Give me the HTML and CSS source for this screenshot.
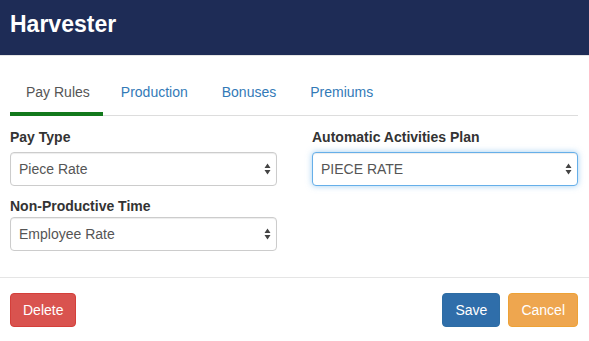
FILE: index.html
```html
<!DOCTYPE html>
<html lang="en">
<head>
<meta charset="utf-8">
<title>Harvester</title>
<link rel="stylesheet" href="styles.css">
</head>
<body>
<div class="modal">
  <header class="modal-header">
    <h1 class="modal-title">Harvester</h1>
  </header>
  <div class="modal-body">
    <ul class="tabs">
      <li class="tab active">Pay Rules</li>
      <li class="tab">Production</li>
      <li class="tab">Bonuses</li>
      <li class="tab">Premiums</li>
    </ul>
    <div class="form-grid">
      <div class="col">
        <div class="group first">
          <label class="label">Pay Type</label>
          <div class="select">
            <span class="select-value">Piece Rate</span>
            <svg class="caret" width="7" height="12" viewBox="0 0 7 12"><path d="M3.5 0.5 L6.5 5 L0.5 5 Z M0.5 7 L6.5 7 L3.5 11.5 Z" fill="#444"/></svg>
          </div>
        </div>
        <div class="group second">
          <label class="label">Non-Productive Time</label>
          <div class="select">
            <span class="select-value">Employee Rate</span>
            <svg class="caret" width="7" height="12" viewBox="0 0 7 12"><path d="M3.5 0.5 L6.5 5 L0.5 5 Z M0.5 7 L6.5 7 L3.5 11.5 Z" fill="#444"/></svg>
          </div>
        </div>
      </div>
      <div class="col">
        <div class="group first">
          <label class="label">Automatic Activities Plan</label>
          <div class="select focused">
            <span class="select-value">PIECE RATE</span>
            <svg class="caret" width="7" height="12" viewBox="0 0 7 12"><path d="M3.5 0.5 L6.5 5 L0.5 5 Z M0.5 7 L6.5 7 L3.5 11.5 Z" fill="#444"/></svg>
          </div>
        </div>
      </div>
    </div>
  </div>
  <footer class="modal-footer">
    <button class="btn btn-danger">Delete</button>
    <div class="footer-right">
      <button class="btn btn-primary">Save</button>
      <button class="btn btn-warning">Cancel</button>
    </div>
  </footer>
</div>
</body>
</html>
```

FILE: styles.css
```css
* { box-sizing: border-box; }

html, body {
  margin: 0;
  padding: 0;
  background: #fff;
}

body {
  font-family: "Liberation Sans", Arial, Helvetica, sans-serif;
  font-size: 14px;
  line-height: 20px;
  color: #333;
}

.modal-header {
  height: 56px;
  background: #1e2c56;
  border-bottom: 1px solid #e5e5e5;
  padding: 10px 10px 0 10px;
}

.modal-title {
  margin: 0;
  font-size: 23px;
  line-height: 28px;
  font-weight: bold;
  color: #fff;
}

.modal-body {
  padding: 16px 11px 26px 10px;
}

.tabs {
  list-style: none;
  margin: 0;
  padding: 0;
  display: flex;
  border-bottom: 1px solid #ddd;
}

.tab {
  padding: 10px 16px 10px 16px;
  margin-right: 2px;
  margin-bottom: -1px;
  border-bottom: 4px solid transparent;
  color: #337ab7;
  line-height: 20px;
}

.tab.active {
  color: #555;
  padding-right: 13px;
  border-bottom-color: #12791c;
}

.form-grid {
  display: grid;
  grid-template-columns: 267px 1fr;
  column-gap: 35px;
  margin-top: 11px;
}

.group { display: flex; flex-direction: column; }

.group.second { margin-top: 10px; }

.label {
  font-weight: bold;
  color: #333;
  line-height: 20px;
}

.group.first .label { margin-bottom: 5px; }
.group.second .label { margin-bottom: 1px; }

.select {
  height: 34px;
  border: 1px solid #ccc;
  border-radius: 4px;
  background: #fff;
  display: flex;
  align-items: center;
  justify-content: space-between;
  padding: 0 5px 0 8px;
  color: #555;
  box-shadow: inset 0 1px 1px rgba(0,0,0,.075);
}

.select.focused {
  border-color: #66afe9;
  box-shadow: inset 0 1px 1px rgba(0,0,0,.075), 0 0 6px rgba(102,175,233,.6);
}

.caret { display: block; }

.modal-footer {
  border-top: 1px solid #e5e5e5;
  padding: 15px 11px 14px 10px;
  display: flex;
  justify-content: space-between;
  align-items: center;
}

.footer-right {
  display: flex;
  gap: 8px;
}

.btn {
  font-family: "Liberation Sans", Arial, Helvetica, sans-serif;
  font-size: 14px;
  line-height: 20px;
  padding: 6px 12px;
  border: 1px solid transparent;
  border-radius: 4px;
  color: #fff;
  cursor: pointer;
}

.btn-danger { background: #d9534f; border-color: #d43f3a; }
.btn-primary { background: #2f6eaa; border-color: #2e6da4; }
.btn-warning { background: #eea64f; border-color: #eea236; }
```
